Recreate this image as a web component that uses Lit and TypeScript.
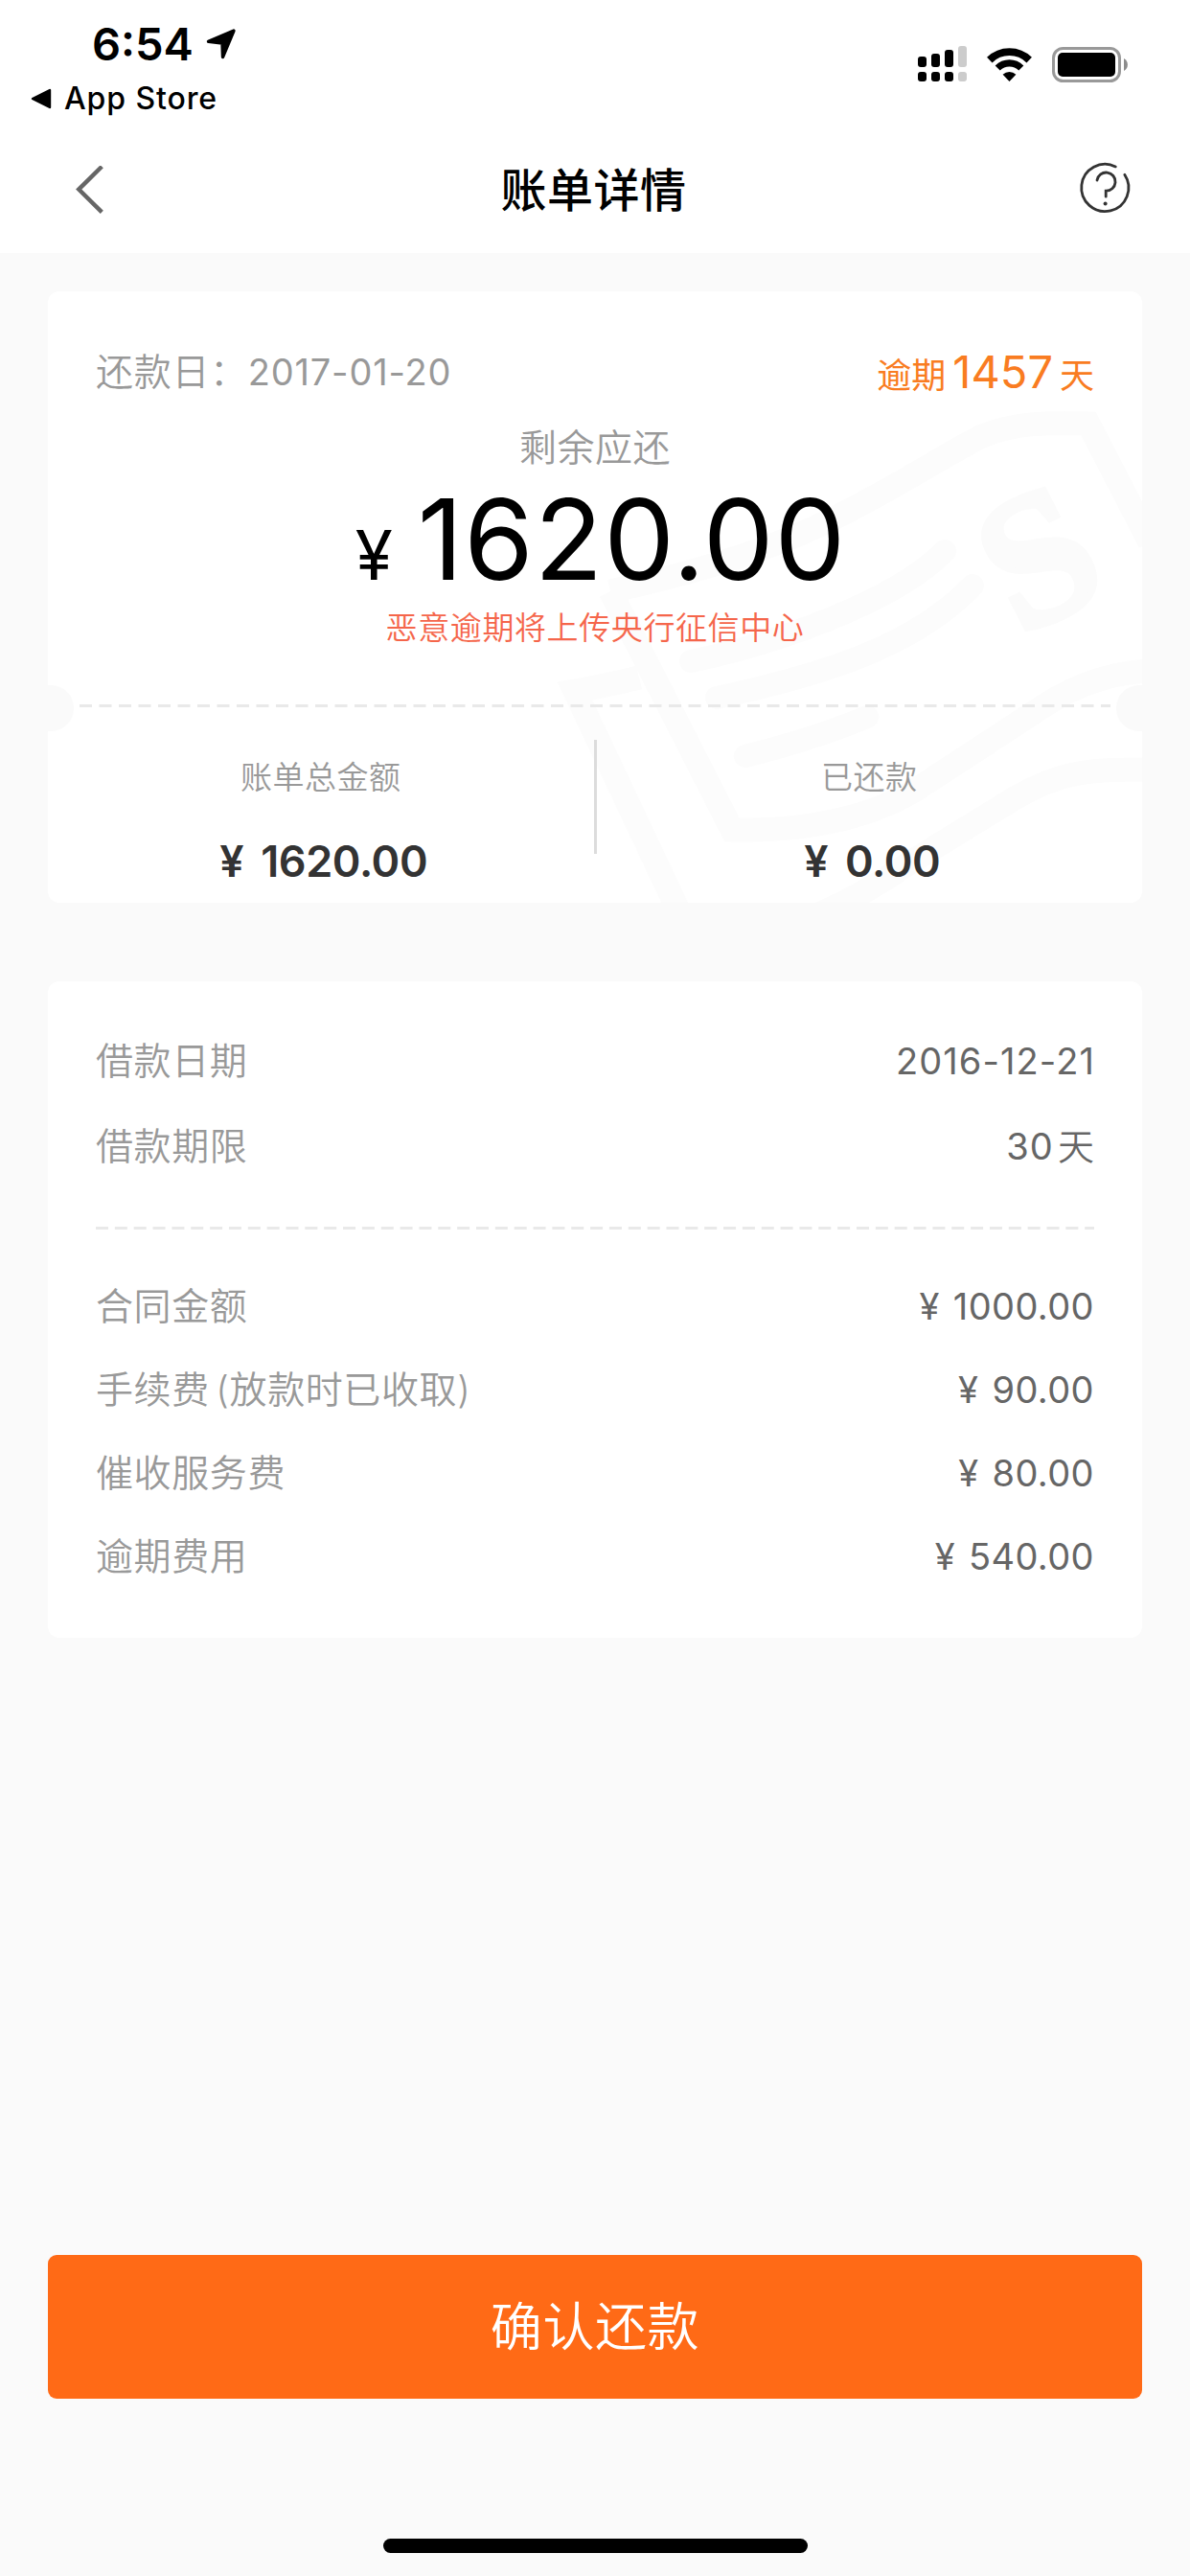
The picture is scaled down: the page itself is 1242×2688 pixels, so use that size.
import { LitElement, html, css, svg, nothing } from "lit";
import { customElement } from "lit/decorators.js";

interface Row { label: string; value: string; unit?: string; }

const loanRows: Row[] = [
  { label: "借款日期", value: "2016-12-21" },
  { label: "借款期限", value: "30", unit: "天" },
];
const feeRows: Row[] = [
  { label: "合同金额", value: "¥ 1000.00" },
  { label: "手续费 (放款时已收取)", value: "¥ 90.00" },
  { label: "催收服务费", value: "¥ 80.00" },
  { label: "逾期费用", value: "¥ 540.00" },
];

const signalColumns = [
  { x: 0, top: 11, height: 11, on: true },
  { x: 14, top: 8, height: 14, on: true },
  { x: 28, top: 4, height: 18, on: true },
  { x: 42, top: 0, height: 22, on: false },
];

@customElement("app-root")
export class AppRoot extends LitElement {
  static styles = css`
    :host { display: block; }
    .page {
      display: flex; flex-direction: column; box-sizing: border-box;
      width: 1242px; height: 2688px; background: #fafafa; overflow: hidden;
      font-family: Inter, "Noto Sans CJK SC", sans-serif; color: #000;
    }
    svg { display: block; flex: none; }
    .top { background: #fff; height: 264px; flex: none; }
    .status { display: flex; justify-content: space-between; height: 132px; }
    .left { padding: 19px 0 0 32px; }
    .clock { display: flex; align-items: flex-start; padding-left: 64px; height: 58px; gap: 13px; }
    .time { font-size: 47px; font-weight: 600; line-height: 54px; }
    .arrow { margin-top: 11px; }
    .back-app { display: flex; align-items: center; gap: 13px; height: 52px; }
    .store { font-size: 32px; font-weight: 500; line-height: 52px; letter-spacing: 0.9px; }
    .right { display: flex; gap: 21px; padding: 48px 64px 0 0; }
    .nav { display: flex; align-items: center; justify-content: space-between; height: 132px; padding: 0 61px 0 79px; }
    .help { overflow: visible; }
    .title { font-size: 48px; font-weight: 500; line-height: 60px; margin: 0; padding: 2px 0 0 4px; letter-spacing: 0.5px; }
    .card { position: relative; margin: 0 50px; border-radius: 12px; background: #fff; overflow: hidden; flex: none; }
    .bill { height: 638px; margin-top: 40px; }
    .mark { position: absolute; right: 0; top: 0; }
    .mark-letter { font-family: "Liberation Serif", serif; font-weight: 700; font-size: 196px; }
    .body { position: relative; }
    .due { display: flex; justify-content: space-between; padding: 54px 50px 0; height: 60px; color: #999; font-size: 38px; line-height: 60px; }
    .due-label { font-size: 39px; font-weight: 350; letter-spacing: 0.7px; }
    .due-date { letter-spacing: 0.8px; }
    .late { color: #f97c21; font-size: 36px; display: flex; align-items: baseline; gap: 7px; }
    .days { font-size: 47px; }
    .caption { margin-top: 24px; text-align: center; font-size: 39px; font-weight: 350; letter-spacing: 0.5px; line-height: 50px; color: #999; }
    .amount { margin-top: 16px; padding-left: 12px; display: flex; justify-content: center; align-items: baseline; line-height: 110px; height: 110px; gap: 26px; }
    .yen { font-size: 71px; }
    .big { font-size: 117px; letter-spacing: 1px; }
    .warn { margin-top: 17px; text-align: center; font-size: 33px; letter-spacing: 0.6px; font-weight: 350; line-height: 40px; color: #f5664b; }
    .tear { margin-top: 40px; display: flex; justify-content: space-between; align-items: center; height: 48px; }
    .notch { width: 27px; height: 48px; background: #fafafa; flex: none; }
    .notch.start { border-radius: 0 24px 24px 0; }
    .notch.end { border-radius: 24px 0 0 24px; }
    .tear-line { margin-top: -6px; }
    .split { display: flex; }
    .col { flex: 1; display: flex; flex-direction: column; align-items: center; gap: 40px; padding-top: 28px; }
    .bar { width: 3px; height: 119px; margin-top: 9px; background: #dcdcdc; }
    .key { font-size: 33px; font-weight: 350; line-height: 40px; letter-spacing: 0.5px; color: #999; }
    .sum { font-size: 45px; font-weight: 600; line-height: 56px; padding-left: 6px; letter-spacing: -0.4px; word-spacing: 7px; color: #333; }
    .detail { margin-top: 82px; height: 685px; box-sizing: border-box; padding: 58px 50px 0; }
    .rows { display: flex; flex-direction: column; gap: 37px; }
    .rows.loan { gap: 39px; }
    .row { display: flex; justify-content: space-between; line-height: 50px; font-size: 38px; }
    .label { color: #999; font-size: 39px; font-weight: 350; letter-spacing: 0.6px; word-spacing: -5px; }
    .value { color: #666; letter-spacing: 0.4px; word-spacing: 3px; }
    .rows.loan .value { letter-spacing: 1.1px; margin-right: -1px; }
    .unit { margin-left: 4px; font-weight: 350; }
    .rule { margin: 59px 0 55px; }
    .pay {
      margin: 644px 50px 0; height: 150px; border: 0; border-radius: 9px; padding: 0; flex: none;
      background: #ff6a16; color: #fff; font-family: inherit; font-size: 54px; font-weight: 350;
      letter-spacing: 0.6px; line-height: 152px;
    }
    .home { width: 443px; height: 15px; border-radius: 8px; background: #000; margin: 146px auto 0; flex: none; }
  `;

  private dashes(width: number, period: number) {
    return html`<svg width=${width} height="3" viewBox="0 0 ${width} 3">
      <line x1="0" y1="1.5" x2=${width} y2="1.5" stroke="#e9e9e9" stroke-width="3" stroke-dasharray="13 ${period - 13}" />
    </svg>`;
  }

  private row(r: Row) {
    return html`<div class="row"><span class="label">${r.label}</span><span class="value">${r.value}${r.unit ? html`<span class="unit">${r.unit}</span>` : nothing}</span></div>`;
  }

  render() {
    return html`
      <div class="page">
        <div class="top">
          <div class="status">
            <div class="left">
              <div class="clock">
                <span class="time">6:54</span>
                <svg class="arrow" width="32" height="32" viewBox="0 0 32 32">
                  <path d="M29 2 L2.5 13.4 L17 15 L17.5 29.5 Z" stroke="#000" stroke-width="3.4" stroke-linejoin="round" />
                </svg>
              </div>
              <div class="back-app">
                <svg width="22" height="22" viewBox="0 0 22 22">
                  <path d="M2 11 L20 2 L20 20 Z" stroke="#000" stroke-width="2.4" stroke-linejoin="round" />
                </svg>
                <span class="store">App Store</span>
              </div>
            </div>
            <div class="right">
              <svg width="51" height="38" viewBox="0 0 51 38">
                ${signalColumns.map((c) => svg`
                  <rect x=${c.x} y=${c.top} width="9" height=${c.height} rx="3" fill=${c.on ? "#000" : "#ccc"} />
                  <rect x=${c.x} y="27" width="9" height="10" rx="3" fill=${c.on ? "#000" : "#ccc"} />`)}
              </svg>
              <svg width="47" height="38" viewBox="0 0 47 38" fill="none" stroke="#000">
                <path d="M2.8 14.6 A29.5 29.5 0 0 1 44.2 14.6" stroke-width="7.8" />
                <path d="M11.2 23 A17.5 17.5 0 0 1 35.8 23" stroke-width="7.2" />
                <path d="M23.5 37 L16.6 29.8 A10 10 0 0 1 30.4 29.8 Z" fill="#000" stroke="none" />
              </svg>
              <svg width="80" height="38" viewBox="0 0 80 38">
                <rect x="1.5" y="2.5" width="69" height="34" rx="10" fill="none" stroke="#999" stroke-width="3" />
                <rect x="6" y="7" width="60" height="25" rx="5" />
                <path d="M75 13 A7.4 7.4 0 0 1 75 26 Z" fill="#8c8c8c" />
              </svg>
            </div>
          </div>
          <div class="nav">
            <svg width="29" height="50" viewBox="0 0 29 50">
              <path d="M27.3 0.8 L3.2 24.6 L27.3 48.4" fill="none" stroke="#666" stroke-width="4.4" />
            </svg>
            <h1 class="title">账单详情</h1>
            <svg class="help" width="54" height="54" viewBox="0 0 54 54" fill="none" stroke="#333" stroke-width="2.8" stroke-linecap="round">
              <path d="M37.3 2.9 A24.6 24.6 0 1 0 46.8 11.3" />
              <path d="M18 17 A9.6 9.6 0 1 1 27.2 28.2 L27.2 34.2" />
              <circle cx="26.6" cy="41.6" r="2" fill="#333" stroke="none" />
            </svg>
          </div>
        </div>

        <section class="card bill">
          <svg class="mark" width="640" height="638" viewBox="552 304 640 638" fill="none" stroke="#fcfcfc" stroke-width="25">
            <path d="M637 617 C730 597 803 573 860 546 C930 512 980 478 1025 455 C1060 441 1090 441 1136 442 L1200 566" />
            <path d="M637 617 L764 866 C850 868 915 850 959 822 L1092 735 Q1142 703 1200 700" />
            <path d="M667 707 Q630 716 600 721 L708 950" />
            <path d="M850 956 Q900 935 950 900 L1059 833 C1110 803 1142 803 1200 803" />
            <g stroke-linecap="round" stroke-width="24">
              <path d="M721 690 C803 673 932 630 986 575" />
              <path d="M748 728 C860 704 955 674 1015 611" />
              <path d="M778 789 Q850 771 905 748" />
            </g>
            <text class="mark-letter" x="0" y="0" transform="translate(1084 583) rotate(-27)" text-anchor="middle" dy="64" fill="#fbfbfb" stroke="#fbfbfb" stroke-width="6">S</text>
          </svg>
          <div class="body">
            <div class="due">
              <div><span class="due-label">还款日：</span><span class="due-date">2017-01-20</span></div>
              <div class="late"><span>逾期</span><span class="days">1457</span><span>天</span></div>
            </div>
            <div class="caption">剩余应还</div>
            <div class="amount"><span class="yen">¥</span><span class="big">1620.00</span></div>
            <div class="warn">恶意逾期将上传央行征信中心</div>
            <div class="tear">
              <div class="notch start"></div>
              <div class="tear-line">${this.dashes(1076, 20.5)}</div>
              <div class="notch end"></div>
            </div>
            <div class="split">
              <div class="col"><span class="key">账单总金额</span><span class="sum">¥ 1620.00</span></div>
              <div class="bar"></div>
              <div class="col"><span class="key">已还款</span><span class="sum">¥ 0.00</span></div>
            </div>
          </div>
        </section>

        <section class="card detail">
          <div class="rows loan">${loanRows.map((r) => this.row(r))}</div>
          <div class="rule">${this.dashes(1042, 19.85)}</div>
          <div class="rows">${feeRows.map((r) => this.row(r))}</div>
        </section>

        <button class="pay">确认还款</button>
        <div class="home"></div>
      </div>
    `;
  }
}
